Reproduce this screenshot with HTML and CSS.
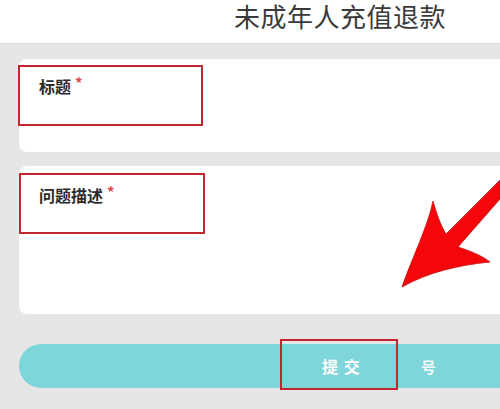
FILE: index.html
```html
<!DOCTYPE html>
<html lang="zh">
<head>
<meta charset="utf-8">
<link rel="stylesheet" href="styles.css">
</head>
<body>
<header class="top">
  <h1 class="title">未成年人充值退款</h1>
</header>
<main class="form">
  <section class="card card-title">
    <div class="label">标题<span class="req">*</span></div>
    <div class="mark mark-1"></div>
  </section>
  <section class="card card-desc">
    <div class="label">问题描述<span class="req">*</span></div>
    <div class="mark mark-2"></div>
  </section>
  <div class="submit">
    <span class="submit-text">提 交</span><span class="ghost">号</span>
    <div class="mark mark-3"></div>
  </div>
</main>
<svg class="arrow" viewBox="0 0 500 409" width="500" height="409">
  <path d="M402 287 C412 258 428 226 433 201 C437 215 441 226 446 234 L500 180 L500 199 L458 247 C470 251 481 255 490 262 C460 265 428 272 402 287 Z" fill="#f5060a" stroke="#c41010" stroke-width="0.8"/>
</svg>
</body>
</html>
```
FILE: styles.css
```css
html, body {
  margin: 0;
  padding: 0;
}
body {
  width: 500px;
  height: 409px;
  overflow: hidden;
  background: #e6e6e6;
  font-family: "Noto Sans CJK SC", "Noto Sans", sans-serif;
  position: relative;
}
.top {
  height: 44px;
  background: #fff;
  border-bottom: 1px solid #d6d6d6;
  box-sizing: border-box;
  padding-left: 234px;
}
.title {
  margin: 0;
  font-size: 26px;
  font-weight: 400;
  color: #3a3a3a;
  line-height: 32px;
  letter-spacing: 0.5px;
  white-space: nowrap;
}
.form {
  padding: 15px 0 0 19px;
  display: flex;
  flex-direction: column;
}
.card {
  background: #fff;
  border-radius: 8px 0 0 8px;
  position: relative;
  box-sizing: border-box;
  padding: 16px 0 0 20px;
}
.card-title {
  height: 93px;
}
.card-desc {
  height: 148px;
  margin-top: 14px;
  padding-top: 18px;
}
.label {
  font-size: 16px;
  font-weight: 700;
  color: #2b2b2b;
  line-height: 22px;
}
.req {
  color: #e0474c;
  margin-left: 4px;
  font-size: 15px;
  vertical-align: top;
  position: relative;
  top: -3px;
}
.mark {
  position: absolute;
  border: 2px solid #c4262d;
  box-sizing: border-box;
}
.mark-1 {
  left: -1px;
  top: 6px;
  width: 185px;
  height: 61px;
}
.mark-2 {
  left: 0;
  top: 7px;
  width: 186px;
  height: 61px;
}
.submit {
  position: relative;
  margin-top: 30px;
  height: 44px;
  background: #7ed5da;
  border-radius: 22px 0 0 22px;
  display: flex;
  align-items: center;
  padding-left: 303px;
}
.submit-text {
  color: #fff;
  font-size: 16px;
  font-weight: 700;
  letter-spacing: 1px;
  white-space: pre;
}
.ghost {
  color: #ffffff;
  opacity: 0.9;
  font-size: 15px;
  font-weight: 700;
  margin-left: 60px;
}
.mark-3 {
  left: 261px;
  top: -5px;
  width: 118px;
  height: 51px;
}
.arrow {
  position: absolute;
  left: 0;
  top: 0;
  pointer-events: none;
}
```
